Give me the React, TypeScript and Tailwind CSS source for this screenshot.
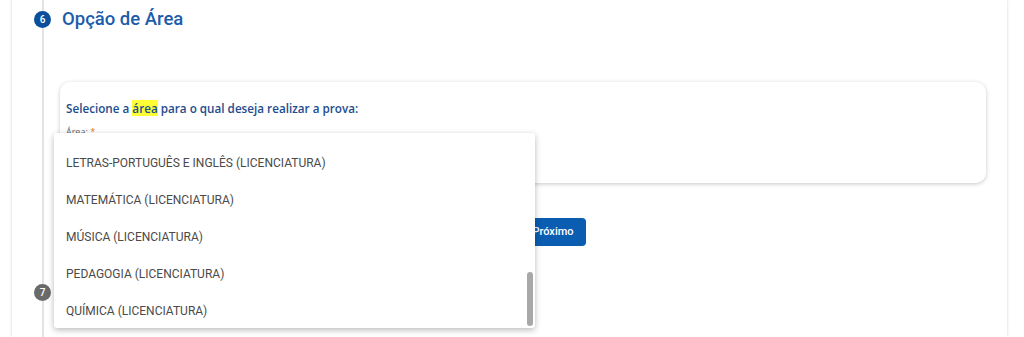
import React from "react";

const items = [
  "LETRAS-PORTUGUÊS E INGLÊS (LICENCIATURA)",
  "MATEMÁTICA (LICENCIATURA)",
  "MÚSICA (LICENCIATURA)",
  "PEDAGOGIA (LICENCIATURA)",
  "QUÍMICA (LICENCIATURA)",
];

export default function App() {
  return (
    <div className="relative h-[337px] w-[1024px] overflow-hidden bg-white" style={{ fontFamily: "Roboto, 'Noto Sans', sans-serif" }}>
      <div className="ml-[12px] flex h-full w-[995px] bg-white shadow-[0_0_3px_rgba(0,0,0,0.18)]">
        {/* stepper column */}
        <div className="ml-[22px] flex w-[17px] flex-col items-center">
          <div className="h-[11px] w-[2px] bg-[#e3e3e3]" />
          <div className="flex h-[17px] w-[17px] items-center justify-center rounded-full bg-[#0b4f9c] text-[10px] font-medium text-white">6</div>
          <div className="h-[256px] w-[2px] bg-[#e3e3e3]" />
          <div className="flex h-[17px] w-[17px] items-center justify-center rounded-full bg-[#6a6a6a] text-[10px] font-medium text-white">7</div>
          <div className="flex-1 w-[2px] bg-[#e3e3e3]" />
        </div>
        {/* content */}
        <div className="ml-[11px] flex flex-1 flex-col pr-[21px]">
          <div className="mt-[7px] h-[24px] text-[18.5px] font-medium leading-[24px] text-[#1b5dab]">Opção de Área</div>
          <div className="ml-[-2px] mt-[51px] h-[101px] rounded-[10px] bg-white px-[6px] pt-[17px] shadow-[0_1px_4px_rgba(0,0,0,0.22)]">
            <div className="text-[11.7px] font-semibold leading-[18px] text-[#1d4c8e]" style={{ fontFamily: "'Open Sans', sans-serif" }}>
              Selecione a <span className="bg-[#ffff33]">área</span> para o qual deseja realizar a prova:
            </div>
            <div className="mt-[9px] text-[9px] leading-[11px] text-[#666]" style={{ fontFamily: "'Open Sans', sans-serif" }}>
              Área: <span className="text-[#e07b22]">*</span>
            </div>
          </div>
          <div className="ml-[458px] mt-[35px] flex h-[28px] w-[66px] items-center justify-center rounded-[4px] bg-[#0a5db1] text-[11px] font-medium text-white">
            Próximo
          </div>
        </div>
      </div>

      {/* dropdown overlay */}
      <div className="absolute left-[54px] top-[133px] h-[195px] w-[481px] rounded-[3px] bg-white pt-[11px] shadow-[0_2px_6px_rgba(0,0,0,0.28)]">
        {items.map((t) => (
          <div key={t} className="flex h-[37px] items-center pl-[12px] text-[12px] text-[#4a4a4a]">
            {t}
          </div>
        ))}
        <div className="absolute right-[2px] top-[139px] h-[54px] w-[6px] rounded-full bg-[#a8a8a8]" />
      </div>
    </div>
  );
}
